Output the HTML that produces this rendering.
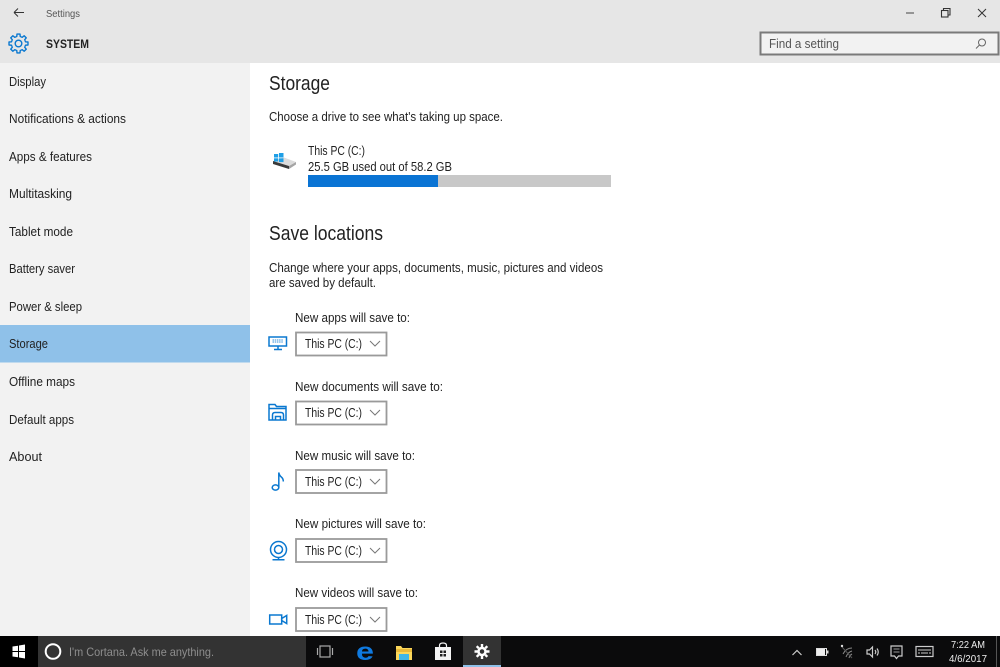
<!DOCTYPE html>
<html><head><meta charset="utf-8"><title>Settings</title>
<style>
html,body{margin:0;padding:0;width:1000px;height:667px;overflow:hidden;background:#fff}
svg{display:block;filter:blur(.3px)}
text{font-family:"Liberation Sans",sans-serif;fill:#222;font-size:13px}
.dd{fill:#fff;stroke:#9a9a9a;stroke-width:1.800}
.ic{fill:none;stroke:#0a78d0;stroke-width:1.500}
.chev{fill:none;stroke:#777;stroke-width:1}
.tb{fill:none;stroke:#ccc;stroke-width:1.200}
</style></head><body>
<svg width="1000" height="667" viewBox="0 0 1000 667" xmlns="http://www.w3.org/2000/svg">
<defs><path id="tooth" d="M-2.760 -6.650L-1.740 -6.990L-1.500 -9.480H1.500L1.740 -6.990L2.760 -6.650"/></defs>
<rect width="1000" height="667" fill="#fff"/>
<rect x="0" y="0" width="1000" height="63" fill="#e6e6e6"/>
<rect x="0" y="63" width="250" height="573" fill="#f2f2f2"/>
<rect x="0" y="325" width="250" height="37.500" fill="#8fc1e9"/>

<!-- title bar -->
<path d="M14 12.500H24M14 12.500l4-4M14 12.500l4 4" fill="none" stroke="#333" stroke-width="1"/>
<text x="46" y="17" style="font-size:10px;fill:#555" textLength="34" lengthAdjust="spacingAndGlyphs">Settings</text>
<g fill="none" stroke="#0a78d0" stroke-width="1.400" stroke-linejoin="round" transform="translate(18.500 43.500)">
<circle r="3.300"/>
<use href="#tooth"/><use href="#tooth" transform="rotate(45)"/><use href="#tooth" transform="rotate(90)"/><use href="#tooth" transform="rotate(135)"/><use href="#tooth" transform="rotate(180)"/><use href="#tooth" transform="rotate(225)"/><use href="#tooth" transform="rotate(270)"/><use href="#tooth" transform="rotate(315)"/>
</g>
<text x="46" y="48" style="font-size:12px;font-weight:bold;fill:#222" textLength="43" lengthAdjust="spacingAndGlyphs">SYSTEM</text>
<path d="M906 13h8" stroke="#444" stroke-width="1"/>
<g fill="none" stroke="#333" stroke-width="1.100"><rect x="941.500" y="10.500" width="6.500" height="6.500"/><path d="M943.500 10.500v-2h6.500v6.500h-2"/></g>
<path d="M978 9l8 8M986 9l-8 8" stroke="#333" stroke-width="1" fill="none"/>
<rect x="760.500" y="32.500" width="238" height="22" fill="#f2f2f2" stroke="#7a7a7a" stroke-width="2"/>
<text x="769" y="48" style="fill:#555" textLength="70" lengthAdjust="spacingAndGlyphs">Find a setting</text>
<g fill="none" stroke="#666" stroke-width="1"><circle cx="982" cy="42.500" r="3.500"/><path d="M979.500 45l-3.500 3.500"/></g>

<!-- sidebar -->
<text x="9" y="86" textLength="37" lengthAdjust="spacingAndGlyphs">Display</text>
<text x="9" y="123" textLength="117" lengthAdjust="spacingAndGlyphs">Notifications &amp; actions</text>
<text x="9" y="161" textLength="83" lengthAdjust="spacingAndGlyphs">Apps &amp; features</text>
<text x="9" y="198" textLength="63" lengthAdjust="spacingAndGlyphs">Multitasking</text>
<text x="9" y="236" textLength="64" lengthAdjust="spacingAndGlyphs">Tablet mode</text>
<text x="9" y="273" textLength="66" lengthAdjust="spacingAndGlyphs">Battery saver</text>
<text x="9" y="311" textLength="73" lengthAdjust="spacingAndGlyphs">Power &amp; sleep</text>
<text x="9" y="348" textLength="39" lengthAdjust="spacingAndGlyphs">Storage</text>
<text x="9" y="386" textLength="66" lengthAdjust="spacingAndGlyphs">Offline maps</text>
<text x="9" y="424" textLength="65" lengthAdjust="spacingAndGlyphs">Default apps</text>
<text x="9" y="461" textLength="33" lengthAdjust="spacingAndGlyphs">About</text>

<!-- main -->
<text x="269" y="90" style="font-size:20px" textLength="61" lengthAdjust="spacingAndGlyphs">Storage</text>
<text x="269" y="121" textLength="234" lengthAdjust="spacingAndGlyphs">Choose a drive to see what's taking up space.</text>
<path d="M273 161L284 157.500L296 162L289 166z" fill="#dcdcdc"/>
<path d="M273 161L289 166v3L273 164z" fill="#3a3a3a"/>
<path d="M289 166L296 162v2.500L289 169z" fill="#a5a5a5"/>
<g fill="#1f9fe6"><rect x="274" y="154" width="4.200" height="3.500"/><rect x="279" y="153" width="4.500" height="4.500"/><rect x="274" y="158.300" width="4.200" height="3.200"/><rect x="279" y="158.300" width="4.500" height="3.800"/></g>
<text x="308" y="155" textLength="57" lengthAdjust="spacingAndGlyphs">This PC (C:)</text>
<text x="308" y="171" textLength="144" lengthAdjust="spacingAndGlyphs">25.5 GB used out of 58.2 GB</text>
<rect x="308" y="175" width="303" height="12" fill="#c8c8c8"/>
<rect x="308" y="175" width="130" height="12" fill="#0a74d4"/>
<text x="269" y="240" style="font-size:20px" textLength="114" lengthAdjust="spacingAndGlyphs">Save locations</text>
<text x="269" y="272" textLength="334" lengthAdjust="spacingAndGlyphs">Change where your apps, documents, music, pictures and videos</text>
<text x="269" y="287" textLength="107" lengthAdjust="spacingAndGlyphs">are saved by default.</text>

<text x="295" y="322" textLength="115" lengthAdjust="spacingAndGlyphs">New apps will save to:</text>
<text x="295" y="391" textLength="148" lengthAdjust="spacingAndGlyphs">New documents will save to:</text>
<text x="295" y="460" textLength="120" lengthAdjust="spacingAndGlyphs">New music will save to:</text>
<text x="295" y="528" textLength="131" lengthAdjust="spacingAndGlyphs">New pictures will save to:</text>
<text x="295" y="597" textLength="123" lengthAdjust="spacingAndGlyphs">New videos will save to:</text>

<g>
<rect class="dd" x="296" y="332.500" width="90.500" height="23"/>
<text x="305" y="348" textLength="57" lengthAdjust="spacingAndGlyphs">This PC (C:)</text>
<path class="chev" d="M370 341l5 5 5-5"/>
<rect class="dd" x="296" y="401.500" width="90.500" height="23"/>
<text x="305" y="417" textLength="57" lengthAdjust="spacingAndGlyphs">This PC (C:)</text>
<path class="chev" d="M370 410l5 5 5-5"/>
<rect class="dd" x="296" y="470" width="90.500" height="23"/>
<text x="305" y="486" textLength="57" lengthAdjust="spacingAndGlyphs">This PC (C:)</text>
<path class="chev" d="M370 479l5 5 5-5"/>
<rect class="dd" x="296" y="539" width="90.500" height="23"/>
<text x="305" y="555" textLength="57" lengthAdjust="spacingAndGlyphs">This PC (C:)</text>
<path class="chev" d="M370 548l5 5 5-5"/>
<rect class="dd" x="296" y="608" width="90.500" height="23"/>
<text x="305" y="624" textLength="57" lengthAdjust="spacingAndGlyphs">This PC (C:)</text>
<path class="chev" d="M370 617l5 5 5-5"/>
</g>

<!-- left icons -->
<g class="ic">
<rect x="269" y="337" width="17.500" height="9"/>
<path d="M278 346v3M274 349.500h8"/>
<path d="M272.500 340h11M272.500 342h11" stroke-dasharray="1.500 .7" stroke-width="1.200" stroke="#5aa5e0"/>
<path d="M269 420v-15.500h6l1.500 2h9.500v13.500z"/>
<path d="M269 408.500h17"/>
<path d="M272.500 420v-5q0-2.500 2.500-2.500h6q2.500 0 2.500 2.500v5M275.500 420v-3.500h5v3.500"/>
<ellipse cx="275.500" cy="487.500" rx="3.300" ry="2.600"/>
<path d="M278.800 487.500v-15q.5 3 2.500 4.500t2 4.500"/>
<circle cx="278.500" cy="549.500" r="8"/>
<circle cx="278.500" cy="549.500" r="4"/>
<path d="M278.500 557.500v2M272.500 559.700h12"/>
<rect x="269.700" y="615" width="12" height="9"/>
<path d="M281.700 618.500l5-3v8l-5-3z"/>
</g>

<!-- taskbar -->
<rect x="0" y="636" width="1000" height="31" fill="#0b0b0c"/>
<rect x="0" y="636" width="38" height="31" fill="#000"/>
<rect x="38" y="636" width="268" height="31" fill="#333333"/>
<rect x="463" y="636" width="38" height="31" fill="#333333"/>
<rect x="463" y="665" width="38" height="2" fill="#8fc1e9"/>
<g fill="#fff"><path d="M12.500 646.500l5.500-.8v5.300h-5.500zM19 645.500l6-1v6.500h-6zM12.500 652h5.500v5.300l-5.500-.8zM19 652h6v6.500l-6-1z"/></g>
<circle cx="53" cy="651.500" r="7.300" fill="none" stroke="#fff" stroke-width="2"/>
<text x="69" y="656" style="font-size:12px;fill:#8e8e8e" textLength="145" lengthAdjust="spacingAndGlyphs">I'm Cortana. Ask me anything.</text>
<g fill="none" stroke="#aaa" stroke-width="1.200"><rect x="320" y="646" width="10" height="11"/><path d="M317.500 648v7M332.500 648v7"/></g>
<text x="356" y="660" style="font-size:25px;font-weight:bold;fill:#0f7ae0" textLength="18" lengthAdjust="spacingAndGlyphs">e</text>
<path d="M396 646h5l1.500 2h9.500v12h-16z" fill="#fbd75b"/>
<rect x="396" y="649" width="16" height="3" fill="#e9b93a"/>
<rect x="399" y="654" width="10" height="6" fill="#3fb6e8"/>
<path d="M435 647h16v13h-16z" fill="#f4f4f4"/>
<path d="M439.500 647v-1.500q0-2.500 3.500-2.500t3.500 2.500v1.500" fill="none" stroke="#f4f4f4" stroke-width="1.200"/>
<g fill="#222"><rect x="440" y="650.500" width="2.500" height="2.500"/><rect x="443.500" y="650.500" width="2.500" height="2.500"/><rect x="440" y="654" width="2.500" height="2.500"/><rect x="443.500" y="654" width="2.500" height="2.500"/></g>
<g fill="none" stroke="#fff"><circle cx="482" cy="651.500" r="3.500" stroke-width="2.500"/><path d="M482 644v3M482 656v3M474.500 651.500h3M486.500 651.500h3M476.700 646.200l2 2M485.300 654.800l2 2M476.700 656.800l2-2M485.300 648.200l2-2" stroke-width="2.400"/></g>

<path d="M792.500 655l4.500-4.500 4.500 4.500" class="tb"/>
<rect x="816.500" y="648.500" width="10" height="7" fill="none" stroke="#ddd"/><rect x="817" y="649" width="8" height="6" fill="#eee"/><rect x="827" y="650.500" width="1.500" height="3" fill="#ddd"/>
<g fill="none" stroke="#888" stroke-width="1"><path d="M843 654q3-6 9-6M846 657q2-5 6-6M849 658q1-3 3-4"/><path d="M842 647l10 11" stroke="#555"/></g>
<circle cx="842" cy="646" r="1.200" fill="#ddd"/>
<g class="tb"><path d="M867 650h2.500l3-3v10l-3-3H867zM875 650q1.500 2 0 4M877 648.500q2.500 3.500 0 7"/></g>
<g class="tb"><path d="M891 646h11v10h-3.500l-2 2.500-2-2.500H891z"/><path d="M893.500 649h6M893.500 652h6" stroke-width=".8"/></g>
<g class="tb"><rect x="916" y="646.500" width="17" height="10"/><path d="M918 650h13M918 653h2M921 653h7M929 653h2" stroke-width=".9"/></g>
<text x="951" y="648" style="font-size:10.500px;fill:#eee" textLength="34" lengthAdjust="spacingAndGlyphs">7:22 AM</text>
<text x="949" y="662" style="font-size:10.500px;fill:#eee" textLength="38" lengthAdjust="spacingAndGlyphs">4/6/2017</text>
<path d="M996.500 636v31" stroke="#555" stroke-width="1"/>
</svg>
</body></html>
